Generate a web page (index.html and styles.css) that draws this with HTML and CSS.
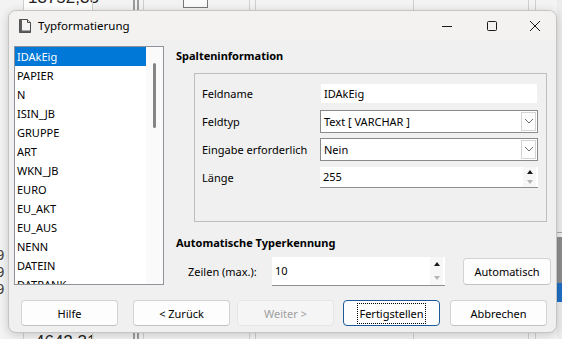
FILE: index.html
```html
<!DOCTYPE html>
<html lang="de">
<head>
    <meta charset="UTF-8">
    <title>Typformatierung</title>
    <link rel="stylesheet" href="styles.css">
</head>
<body>
    <div class="desk">
        <!-- spreadsheet behind the dialog -->
        <div class="sheet-top"></div>
        <div class="sheet-text top-num">13752,35</div>
        <div class="sheet-text bottom-num">4642,31</div>
        <div class="vline" style="left:23px"></div>
        <div class="vline" style="left:92px"></div>
        <div class="vline dark" style="left:133px"></div>
        <div class="vline dark" style="left:137px"></div>
        <div class="vline" style="left:143px"></div>
        <div class="vline" style="left:249px"></div>
        <div class="vline" style="left:255px"></div>
        <div class="vline" style="left:413px"></div>
        <div class="vline" style="left:528px"></div>
        <div class="vline" style="left:535px"></div>
        <div class="sheet-icon"></div>
        <div class="edge-nines">
            <span>9</span><span>9</span><span>9</span>
        </div>
        <div class="right-strip">
            <div class="rs-line"></div>
            <div class="rs-dark"></div>
            <div class="rs-blue"></div>
        </div>

        <div class="dialog">
            <div class="titlebar">
                <svg class="app-icon" width="16" height="16" viewBox="0 0 16 16">
                    <path d="M2.5 1.5h8l3 3v10h-11z" fill="#f4f4f4" stroke="#4a4a4a"/>
                    <path d="M2.5 1.5h2.5v13h-2.5z" fill="#5c5c5c"/>
                    <path d="M2.5 12.5h11v2h-11z" fill="#5c5c5c"/>
                    <path d="M10.5 1.5v3h3" fill="#d8d8d8" stroke="#4a4a4a"/>
                </svg>
                <span class="title">Typformatierung</span>
                <div class="ctl">
                    <svg width="12" height="12" viewBox="0 0 12 12"><path d="M1 6.5h10" stroke="#1a1a1a"/></svg>
                </div>
                <div class="ctl">
                    <svg width="12" height="12" viewBox="0 0 12 12"><rect x="1.5" y="1.5" width="9" height="9" rx="1" fill="none" stroke="#1a1a1a"/></svg>
                </div>
                <div class="ctl close">
                    <svg width="12" height="12" viewBox="0 0 12 12"><path d="M1 1l10 10M11 1L1 11" stroke="#1a1a1a"/></svg>
                </div>
            </div>

            <div class="content">
                <div class="listbox">
                    <ul class="items">
                        <li class="selected">IDAkEig</li>
                        <li>PAPIER</li>
                        <li>N</li>
                        <li>ISIN_JB</li>
                        <li>GRUPPE</li>
                        <li>ART</li>
                        <li>WKN_JB</li>
                        <li>EURO</li>
                        <li>EU_AKT</li>
                        <li>EU_AUS</li>
                        <li>NENN</li>
                        <li>DATEIN</li>
                        <li>DATRANK</li>
                    </ul>
                    <div class="scrollbar"><div class="thumb"></div></div>
                </div>

                <div class="panel">
                    <div class="heading">Spalteninformation</div>
                    <div class="groupbox">
                        <label>Feldname</label>
                        <div class="field plain">IDAkEig</div>

                        <label>Feldtyp</label>
                        <div class="field combo">
                            <span class="value">Text [ VARCHAR ]</span>
                            <span class="drop">
                                <svg width="10" height="6" viewBox="0 0 10 6"><path d="M1 1l4 4 4-4" fill="none" stroke="#6b6b6b"/></svg>
                            </span>
                        </div>

                        <label>Eingabe erforderlich</label>
                        <div class="field combo">
                            <span class="value">Nein</span>
                            <span class="drop">
                                <svg width="10" height="6" viewBox="0 0 10 6"><path d="M1 1l4 4 4-4" fill="none" stroke="#6b6b6b"/></svg>
                            </span>
                        </div>

                        <label>Länge</label>
                        <div class="field spin">
                            <span class="value">255</span>
                            <span class="spin-btns">
                                <span class="up"></span>
                                <span class="down"></span>
                            </span>
                        </div>
                    </div>

                    <div class="heading second">Automatische Typerkennung</div>
                    <div class="auto-row">
                        <label class="rows-label">Zeilen (max.):</label>
                        <div class="field spin rows">
                            <span class="value">10</span>
                            <span class="spin-btns">
                                <span class="up"></span>
                                <span class="down"></span>
                            </span>
                        </div>
                        <button class="btn auto">Automatisch</button>
                    </div>
                </div>
            </div>

            <div class="footer">
                <button class="btn">Hilfe</button>
                <button class="btn back">&lt; Zurück</button>
                <button class="btn next" disabled>Weiter &gt;</button>
                <button class="btn finish"><span class="focus">Fertigstellen</span></button>
                <button class="btn cancel">Abbrechen</button>
            </div>
        </div>
    </div>
</body>
</html>
```

FILE: styles.css
```css
* {
    box-sizing: border-box;
}
body {
    margin: 0;
    font-family: "Noto Sans", "Open Sans", sans-serif;
    font-size: 11px;
    color: #000;
}
.desk {
    position: relative;
    width: 562px;
    height: 339px;
    overflow: hidden;
    background: #f3f3f3;
}

/* background spreadsheet */
.sheet-top {
    position: absolute;
    left: 23px;
    top: 0;
    width: 69px;
    height: 12px;
    background: #fff;
}
.sheet-text {
    position: absolute;
    font-family: "Liberation Sans", sans-serif;
    font-size: 17px;
    color: #222;
}
.top-num {
    left: 28px;
    top: -12px;
}
.bottom-num {
    left: 35px;
    top: 332px;
}
.vline {
    position: absolute;
    top: 0;
    bottom: 0;
    width: 1px;
    background: #cfcfcf;
}
.vline.dark {
    width: 2px;
    background: #9c9c9c;
}
.sheet-icon {
    position: absolute;
    left: 183px;
    top: -4px;
    width: 25px;
    height: 12px;
    border: 1px solid #777;
    background: #fafafa;
}
.edge-nines {
    position: absolute;
    left: -4px;
    top: 246px;
    display: flex;
    flex-direction: column;
    font-family: "Liberation Sans", sans-serif;
    font-size: 15px;
    line-height: 17px;
    color: #444;
}
.right-strip {
    position: absolute;
    right: 0;
    top: 0;
    width: 5px;
    height: 339px;
    background: #ececec;
}
.rs-line {
    margin-top: 232px;
    height: 1px;
    background: #a8a8a8;
}
.rs-dark {
    margin-top: 4px;
    height: 46px;
    background: #8d8d8d;
}
.rs-blue {
    height: 19px;
    background: #1f6fc5;
}

/* dialog window */
.dialog {
    position: absolute;
    left: 8px;
    top: 10px;
    width: 549px;
    height: 323px;
    background: #f0f0f0;
    border: 1px solid #c4c4c4;
    border-radius: 8px;
    box-shadow: 0 2px 10px rgba(0, 0, 0, 0.18);
    display: flex;
    flex-direction: column;
    overflow: hidden;
}
.titlebar {
    height: 29px;
    display: flex;
    align-items: center;
    background: #f3f2f0;
    padding-left: 8px;
}
.app-icon {
    margin-top: 1px;
}
.title {
    margin-left: 5px;
    font-size: 11.5px;
    flex: 1;
}
.ctl {
    width: 45px;
    height: 29px;
    display: flex;
    align-items: center;
    justify-content: center;
}
.ctl.close {
    width: 42px;
}

.content {
    display: flex;
    height: 240px;
    margin-top: 6px;
    padding-left: 5px;
}

/* field list */
.listbox {
    width: 150px;
    height: 239px;
    background: #fff;
    border: 1px solid #8f9399;
    display: flex;
    overflow: hidden;
}
.items {
    list-style: none;
    margin: 0;
    padding: 0;
    flex: 1;
}
.items li {
    height: 19px;
    line-height: 19px;
    padding-left: 2px;
}
.items li.selected {
    background: #0078d7;
    color: #fff;
}
.scrollbar {
    width: 17px;
    background: #fafafa;
    padding-top: 16px;
    display: flex;
    justify-content: center;
}
.thumb {
    width: 3px;
    height: 65px;
    border-radius: 2px;
    background: #858585;
}

/* right side */
.panel {
    margin-left: 12px;
    flex: 1;
}
.heading {
    font-weight: 700;
    height: 17px;
    line-height: 17px;
    margin-top: 1px;
}
.heading.second {
    margin-top: 12px;
}
.groupbox {
    margin: 9px 0 0 18px;
    width: 353px;
    height: 149px;
    border: 1px solid #bdbdbd;
    padding: 5px 0 0 7px;
    display: grid;
    grid-template-columns: 118px 218px;
    grid-auto-rows: 28px;
    align-items: center;
}
.field {
    background: #fff;
    display: flex;
    align-items: center;
    padding-left: 3px;
}
.field.plain {
    height: 21px;
    border: 1px solid #f0f0f0;
}
.field.combo {
    height: 23px;
    border: 1px solid #8a8a8a;
    padding-right: 1px;
}
.value {
    flex: 1;
}
.drop {
    width: 15px;
    height: 19px;
    border: 1px solid #d4d4d4;
    background: #fdfdfd;
    display: flex;
    align-items: center;
    justify-content: center;
}
.field.spin {
    height: 21px;
    border-bottom: 1px solid #8f8f8f;
    padding-right: 2px;
}
.spin-btns {
    width: 13px;
    height: 100%;
    display: flex;
    flex-direction: column;
    align-items: center;
    justify-content: space-around;
    background: #f7f7f7;
}
.up {
    width: 0;
    height: 0;
    border-left: 3.5px solid transparent;
    border-right: 3.5px solid transparent;
    border-bottom: 4px solid #1a1a1a;
}
.down {
    width: 0;
    height: 0;
    border-left: 3.5px solid transparent;
    border-right: 3.5px solid transparent;
    border-top: 4px solid #b5b5b5;
}

.auto-row {
    display: flex;
    align-items: center;
    height: 30px;
    margin-top: 5px;
}
.rows-label {
    margin-left: 12px;
    width: 84px;
}
.field.spin.rows {
    width: 173px;
    height: 29px;
}
.btn {
    font-family: inherit;
    font-size: 11px;
    color: #000;
    height: 26px;
    width: 97px;
    background: #fdfdfd;
    border: 1px solid #d3d3d3;
    border-bottom-color: #c2c2c2;
    border-radius: 4px;
    padding: 0;
}
.btn.auto {
    margin-left: 18px;
    width: 88px;
    height: 27px;
}

.footer {
    display: flex;
    padding: 14px 0 0 12px;
}
.btn.back {
    margin-left: 15px;
}
.btn.next {
    margin-left: 7px;
    color: #a0a0a0;
    background: #f5f5f5;
    border-color: #e6e6e6;
}
.btn.finish {
    margin-left: 9px;
    border: 1px solid #1b5a9a;
}
.focus {
    border: 1px dotted #000;
    padding: 2px 1px;
}
.btn.cancel {
    margin-left: 10px;
}
```
